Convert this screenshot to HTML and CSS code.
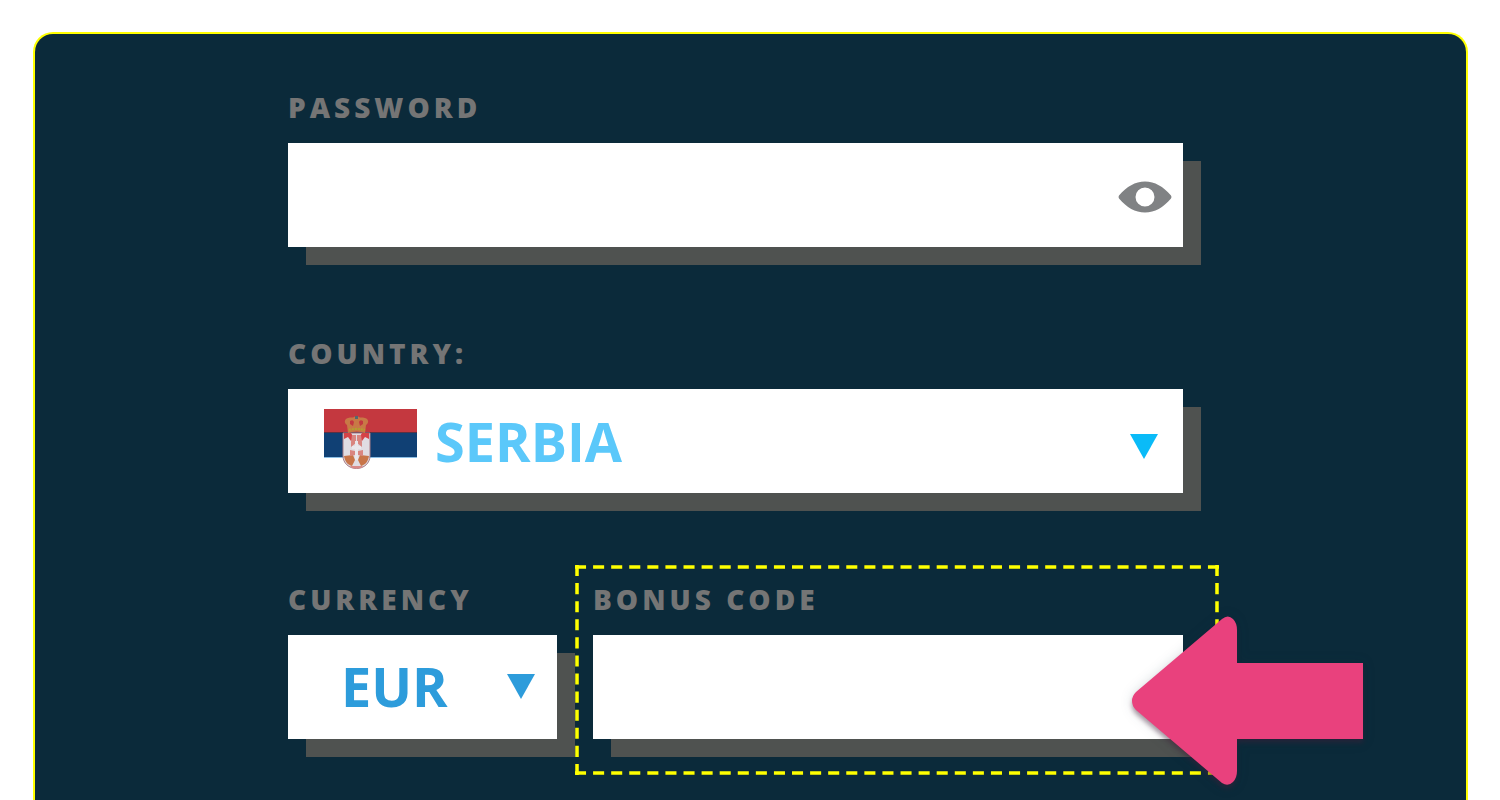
FILE: index.html
```html
<!DOCTYPE html>
<html lang="en">
<head>
    <meta charset="UTF-8">
    <title>Registration</title>
    <link rel="stylesheet" href="styles.css">
</head>
<body>
    <div class="panel">
        <form class="signup">
            <div class="field">
                <label for="password">PASSWORD</label>
                <div class="control">
                    <input type="password" id="password">
                    <button type="button" class="eye-btn" onclick="togglePassword()" aria-label="Show password">
                        <svg width="54" height="32" viewBox="0 0 54 32">
                            <path fill="#808284" fill-rule="evenodd" d="M1 14.500C9 5.500 17 0.500 27 0.500S45 5.500 53 14.500Q54 16 53 17.500C45 26.500 37 31.500 27 31.500S9 26.500 1 17.500Q0 16 1 14.500ZM27 6.500A9.500 9.500 0 1 0 27 25.500A9.500 9.500 0 1 0 27 6.500Z"/>
                        </svg>
                    </button>
                </div>
            </div>

            <div class="field">
                <label for="country">COUNTRY:</label>
                <div class="control">
                    <select id="country" class="country">
                        <option>SERBIA</option>
                    </select>
                    <svg class="flag" width="93" height="62" viewBox="0 0 93 62">
                        <path fill="#c4383f" d="M0 0h93v24H0z"/>
                        <path fill="#104074" d="M0 24h93v24H0z"/>
                        <path fill="#8bbfe6" d="M0 48h93v1H0z"/>
                        <path fill="#5a3144" d="M0 23h93v1H0z"/>
                        <!-- shield -->
                        <path fill="#e0dce2" stroke="#a87c86" d="M19 24h27v23c0 7-6 12.500-13.500 12.500S19 54 19 47z"/>
                        <path fill="#c87549" d="M20 47l9-1 2 5-3 6c-4-1-7-4-8-10zM45 47l-9-1-2 5 3 6c4-1 7-4 8-10z"/>
                        <path fill="#d98987" d="M26 57h13l-2 2q-5 1-9 0z"/>
                        <path fill="#d54347" d="M20 24h7l3 5-3 3-3-4-4 2zM45 24h-7l-3 5 3 3 3-4 4 2z"/>
                        <path fill="#d98580" d="M28 26h4v8l-5 4v-5zM37 26h-4v8l5 4v-5zM26 41l5 1v4l-5 1zM39 41l-5 1v4l5 1z"/>
                        <path fill="#e9e7ec" d="M31 32h3v5h3v3h-3v11h-3V40h-3v-3h3z"/>
                        <!-- crown -->
                        <path fill="#c87946" d="M24 24l-1-8c-3-2-3-6 1-7 3-1 5 0 6-1l2-1h1l2 1c1 1 3 0 6 1 4 1 4 5 1 7l-1 8q-8-3-17 0z"/>
                        <path fill="#c4383f" d="M26 12q3-2 4 1l-1 4-3-2zM39 12q-3-2-4 1l1 4 3-2z"/>
                        <path fill="none" stroke="#b1a32d" stroke-width="2" stroke-dasharray="2 1" d="M25 21q7-2 16 0"/>
                        <path fill="#526a70" d="M31 7h3v3h-3z"/>
                    </svg>
                    <svg class="caret" width="28" height="25" viewBox="0 0 28 25">
                        <path fill="#0abbf8" d="M0 0h28L14 25z"/>
                    </svg>
                </div>
            </div>

            <div class="row">
                <div class="field field-currency">
                    <label for="currency">CURRENCY</label>
                    <div class="control">
                        <select id="currency" class="currency">
                            <option>EUR</option>
                        </select>
                        <svg class="caret caret-currency" width="28" height="25" viewBox="0 0 28 25">
                            <path fill="#2d9cdb" d="M0 0h28L14 25z"/>
                        </svg>
                    </div>
                </div>

                <div class="field field-bonus">
                    <label for="bonus">BONUS CODE</label>
                    <div class="control">
                        <input type="text" id="bonus">
                    </div>
                    <svg class="highlight" viewBox="0 0 641 209" preserveAspectRatio="none">
                        <path d="M0 2H641M0 207H641M2 0V209M639 0V209" fill="none" stroke="#ffff00" stroke-width="3.500" stroke-dasharray="11 7"/>
                    </svg>
                    <svg class="pointer" width="231" height="170" viewBox="0 0 231 170">
                        <path fill="#e9417d" d="M4 76L90 3Q96-2 101 3Q105 7 105 14V47H231V123H105V155Q105 162 101 166Q96 171 90 167L4 94Q0 90 0 85Q0 80 4 76Z"/>
                    </svg>
                </div>
            </div>
        </form>
    </div>

    <script>
        function togglePassword() {
            const input = document.getElementById('password');
            input.type = input.type === 'password' ? 'text' : 'password';
        }
    </script>
</body>
</html>
```
FILE: styles.css
```css
* {
    box-sizing: border-box;
}
body {
    margin: 0;
    padding: 32px 32px 0 33px;
    background: #fff;
    font-family: "Open Sans", sans-serif;
}
.panel {
    min-height: calc(100vh - 32px);
    padding: 53px 283px 0 253px;
    border: 2px solid #ffff00;
    border-bottom: none;
    border-radius: 20px 20px 0 0;
    background: #0b2a3a;
}
.signup {
    display: flex;
    flex-direction: column;
    gap: 86px;
}
.row {
    display: flex;
    gap: 36px;
}
.field {
    display: flex;
    flex-direction: column;
    gap: 16px;
}
.field-currency {
    flex: 269 1 0;
}
.field-bonus {
    position: relative;
    flex: 590 1 0;
}
label {
    color: #757575;
    font-size: 28px;
    font-weight: 800;
    line-height: 40px;
    letter-spacing: 4px;
}
.control {
    position: relative;
    height: 104px;
    background: #fff;
    box-shadow: 18px 18px 0 #4f5250;
}
input,
select {
    display: block;
    width: 100%;
    height: 100%;
    margin: 0;
    border: none;
    border-radius: 0;
    outline: none;
    background: transparent;
    font-family: inherit;
    font-size: 54px;
    font-weight: 700;
}
input {
    padding: 0 80px 0 36px;
    color: #2d9cdb;
}
select {
    appearance: none;
    cursor: pointer;
}
.country {
    padding: 0 60px 0 147px;
    color: #5bc8fa;
}
.currency {
    padding: 0 50px 2px 53px;
    color: #2d9cdb;
}
.eye-btn {
    position: absolute;
    top: 38px;
    right: 11px;
    padding: 0;
    border: none;
    background: none;
    cursor: pointer;
}
.eye-btn svg {
    display: block;
}
.flag {
    position: absolute;
    top: 20px;
    left: 36px;
    pointer-events: none;
}
.caret {
    position: absolute;
    top: 45px;
    right: 25px;
    pointer-events: none;
}
.caret-currency {
    top: 39px;
    right: 22px;
}
.highlight {
    position: absolute;
    top: -14px;
    left: -18px;
    width: calc(100% + 54px);
    height: 210px;
    pointer-events: none;
}
.pointer {
    position: absolute;
    top: 37px;
    right: -180px;
    overflow: visible;
    pointer-events: none;
    filter: drop-shadow(0 4px 2px rgba(70, 30, 55, 0.4)) drop-shadow(0 0 6px rgba(11, 42, 58, 0.15));
}
```
